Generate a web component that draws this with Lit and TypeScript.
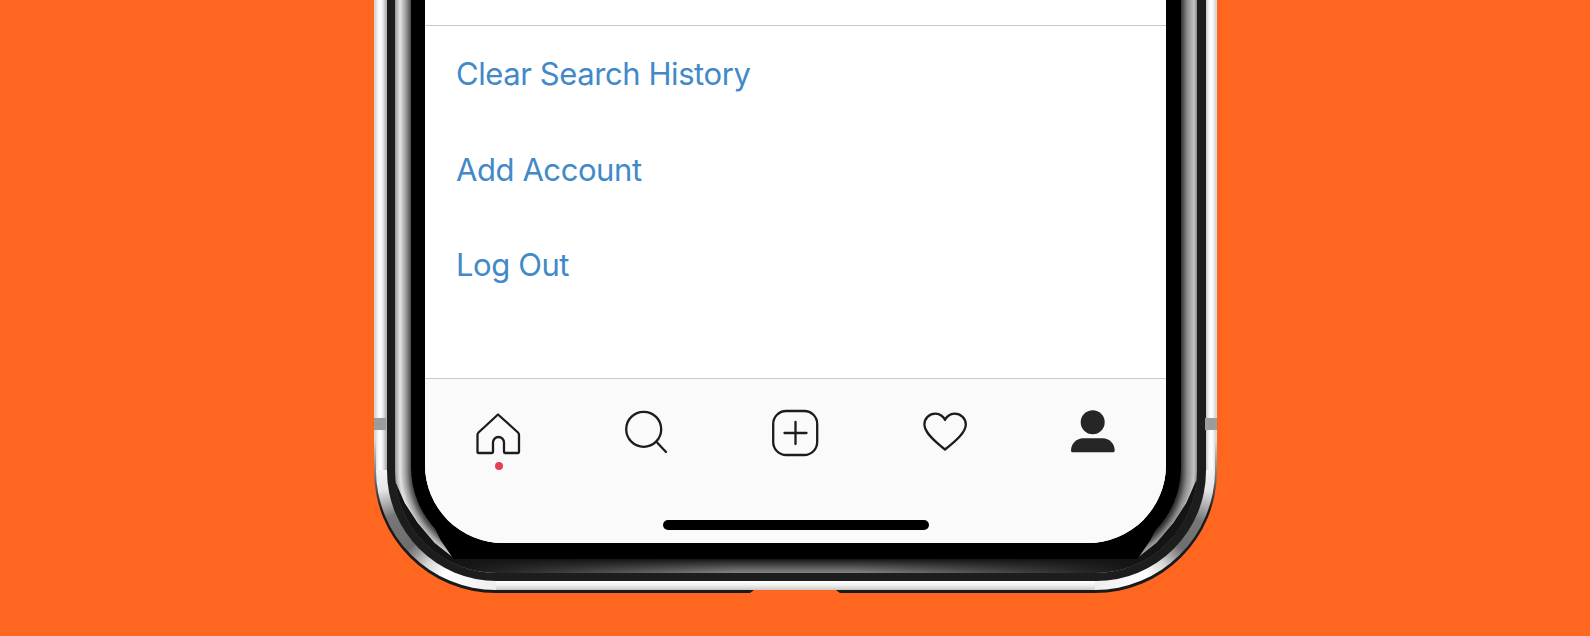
import { LitElement, html, css } from 'lit';
import { customElement } from 'lit/decorators.js';

@customElement('app-root')
export class AppRoot extends LitElement {
  static styles = css`
    :host {
      display: block;
    }

    .page {
      height: 636px;
      overflow: hidden;
      background: #ff6620;
      display: flex;
      justify-content: center;
      align-items: flex-start;
      padding-left: 1px;
      font-family: Inter, 'Liberation Sans', sans-serif;
    }

    /* phone body, nested bands from the outside in. top is cut by the page */
    .edge {
      position: relative;
      width: 843px;
      box-sizing: border-box;
      padding: 0 2px 3px;
      background: linear-gradient(to bottom, #d8d8d8 440px, #1a1a1a 510px);
      border-radius: 0 0 122px 122px;
    }

    .silver {
      padding: 0 9.5px 9px 10.5px;
      border-radius: 0 0 120px 120px;
      background:
        conic-gradient(from 180deg at 100% 0, #eee 0, #fff 26deg, #d8d8d8 36deg, #6e6e6e 48deg, #777 66deg, #e6e6e6 80deg, #f4f4f4 90deg) left bottom / 120px 120px no-repeat,
        conic-gradient(from 90deg at 0 0, #f4f4f4 0, #e6e6e6 10deg, #777 26deg, #6e6e6e 42deg, #d8d8d8 54deg, #fff 64deg, #eee 90deg) right bottom / 120px 120px no-repeat,
        linear-gradient(to bottom, #fff 0, #f2f2f2 45%, #c9c9c9 100%) center bottom / calc(100% - 240px) 9px no-repeat,
        linear-gradient(to right, #e0e0e0 0, #fff 3px, #f6f6f6 6px, #b5b5b5 10px, #b5b5b5 calc(100% - 10px), #f6f6f6 calc(100% - 6px), #fff calc(100% - 3px), #e0e0e0 100%);
    }

    .rim {
      padding: 0 9px 8px 8px;
      border-radius: 0 0 110px 110px;
      background: #1d1d1d;
    }

    .bezel {
      position: relative;
      overflow: hidden;
      padding: 0 16px 14px;
      border-radius: 0 0 102px 102px;
      background:
        radial-gradient(circle at 100% 0, #4a4a4a 86px, #9a9a9a 91px, #e4e4e4 97px, #999 102px) left bottom / 102px 102px no-repeat,
        radial-gradient(circle at 0 0, #333 86px, #8a8a8a 92px, #c4c4c4 99px, #8a8a8a 102px) right bottom / 102px 102px no-repeat,
        linear-gradient(to right, #999 0, #e4e4e4 5px, #9a9a9a 11px, #4a4a4a 16px, #333 calc(100% - 16px), #8a8a8a calc(100% - 10px), #c4c4c4 calc(100% - 3px), #8a8a8a 100%);
    }

    /* dark floor of the bezel, cut so the side highlight ends in a point */
    .bezel::before {
      content: '';
      position: absolute;
      left: 0;
      right: 0;
      bottom: 0;
      height: 120px;
      clip-path: polygon(0 27px, 10px 50px, 23px 70px, 40px 90px, 59px 105px, calc(100% - 59px) 105px, calc(100% - 40px) 90px, calc(100% - 23px) 70px, calc(100% - 10px) 50px, 100% 27px, 100% 100%, 0 100%);
      background:
        linear-gradient(to right, #141414 60px, transparent 340px, transparent calc(100% - 340px), #141414 calc(100% - 60px)),
        linear-gradient(to top, #858585 0, #161616 14px);
    }

    .glass {
      position: relative;
      padding: 0 14.5px 16px;
      background: #000;
      border-radius: 0 0 92px 92px;
    }

    /* the black reaches out to a sharp tip at each lower corner */
    .glass::before {
      content: '';
      position: absolute;
      left: 0;
      right: 0;
      bottom: 0;
      height: 48px;
      background: #000;
      clip-path: polygon(17px 2px, 30px 29px, 43px 100%, calc(100% - 43px) 100%, calc(100% - 30px) 29px, calc(100% - 17px) 2px);
    }

    .screen {
      position: relative;
      display: flex;
      flex-direction: column;
      height: 543px;
      overflow: hidden;
      background: #fff;
      border-radius: 0 0 78px 78px;
    }

    .header {
      flex: none;
      height: 25px;
      border-bottom: 1px solid #c9c9c9;
    }

    .menu {
      flex: 1;
    }

    .row {
      height: 95.4px;
      display: flex;
      align-items: center;
      padding-left: 31px;
      font-size: 31px;
      letter-spacing: -0.42px;
      color: #4289c8;
    }

    .tabbar {
      flex: none;
      height: 165px;
      box-sizing: border-box;
      display: flex;
      flex-direction: column;
      align-items: center;
      padding: 30px 0 13px;
      background: #fafafa;
      border-top: 1px solid #c9c9c9;
    }

    .tabs {
      align-self: stretch;
      display: grid;
      grid-template-columns: repeat(5, 1fr);
    }

    .tab {
      display: flex;
      flex-direction: column;
      align-items: center;
      gap: 5px;
    }

    .tab svg {
      display: block;
      width: 48px;
      height: 48px;
      fill: none;
      stroke: #1c1c1c;
      stroke-width: 2.3;
      stroke-linecap: round;
      stroke-linejoin: round;
    }

    .tab svg.solid {
      fill: #262626;
      stroke: none;
    }

    .dot {
      width: 8px;
      height: 8px;
      border-radius: 50%;
      background: #e4405a;
    }

    .home-bar {
      width: 266px;
      height: 10px;
      margin-top: auto;
      border-radius: 5px;
      background: #000;
    }

    /* side button seams and the bottom cut-out sit over the metal */
    .seam {
      position: absolute;
      top: 418px;
      width: 12px;
      height: 12px;
      background: #9c9c9c;
    }

    .seam.left {
      left: 0;
    }

    .seam.right {
      right: 0;
    }

    .notch {
      position: absolute;
      left: 376px;
      bottom: 0;
      width: 90px;
      height: 3px;
      background: #ff6620;
      clip-path: polygon(0 100%, 4px 0, calc(100% - 4px) 0, 100% 100%);
    }
  `;

  render() {
    return html`
      <div class="page">
        <div class="edge">
          <div class="silver">
            <div class="rim">
              <div class="bezel">
                <div class="glass">
                  <div class="screen">
                    <div class="header"></div>
                    <div class="menu">
                      <div class="row">Clear Search History</div>
                      <div class="row">Add Account</div>
                      <div class="row">Log Out</div>
                    </div>
                    <div class="tabbar">
                      <div class="tabs">
                        <div class="tab">
                          <svg viewBox="0 0 48 48">
                            <path d="M23 5.5 43 23.5Q44 24.5 44 26V43Q44 44 43 44H30Q29 44 29 43V33.5A5.5 5.5 0 0 0 18 33.5V43Q18 44 17 44H3.5Q2.5 44 2.5 43V26Q2.5 24.5 3.5 23.5Z" />
                          </svg>
                          <div class="dot"></div>
                        </div>
                        <div class="tab">
                          <svg viewBox="0 0 48 48">
                            <circle cx="20.7" cy="20.3" r="17.5" />
                            <path d="M34.3 33.7 43 43" />
                          </svg>
                        </div>
                        <div class="tab">
                          <svg viewBox="0 0 48 48">
                            <rect x="2.2" y="2" width="44" height="44" rx="13" />
                            <path d="M24.5 13V35M13.5 24H35.5" />
                          </svg>
                        </div>
                        <div class="tab">
                          <svg viewBox="0 0 48 48">
                            <path d="M25 11C24 8 20 4.7 15.5 4.7 9 4.7 4.4 9.5 4.4 15.5 4.4 23 13 31 25 40.5 37 31 45.8 23 45.8 15.5 45.8 9.5 41 4.7 34.5 4.7 30 4.7 26 8 25 11Z" />
                          </svg>
                        </div>
                        <div class="tab">
                          <svg class="solid" viewBox="0 0 48 48">
                            <circle cx="24.7" cy="13.3" r="12" />
                            <path d="M3 41.5C3 34.5 9 29.3 15 29.3H34.7C41 29.3 46.7 34.5 46.7 41.5 46.7 42.5 46 43.3 45 43.3H4.7C3.7 43.3 3 42.5 3 41.5Z" />
                          </svg>
                        </div>
                      </div>
                      <div class="home-bar"></div>
                    </div>
                  </div>
                </div>
              </div>
            </div>
          </div>
          <div class="seam left"></div>
          <div class="seam right"></div>
          <div class="notch"></div>
        </div>
      </div>
    `;
  }
}
